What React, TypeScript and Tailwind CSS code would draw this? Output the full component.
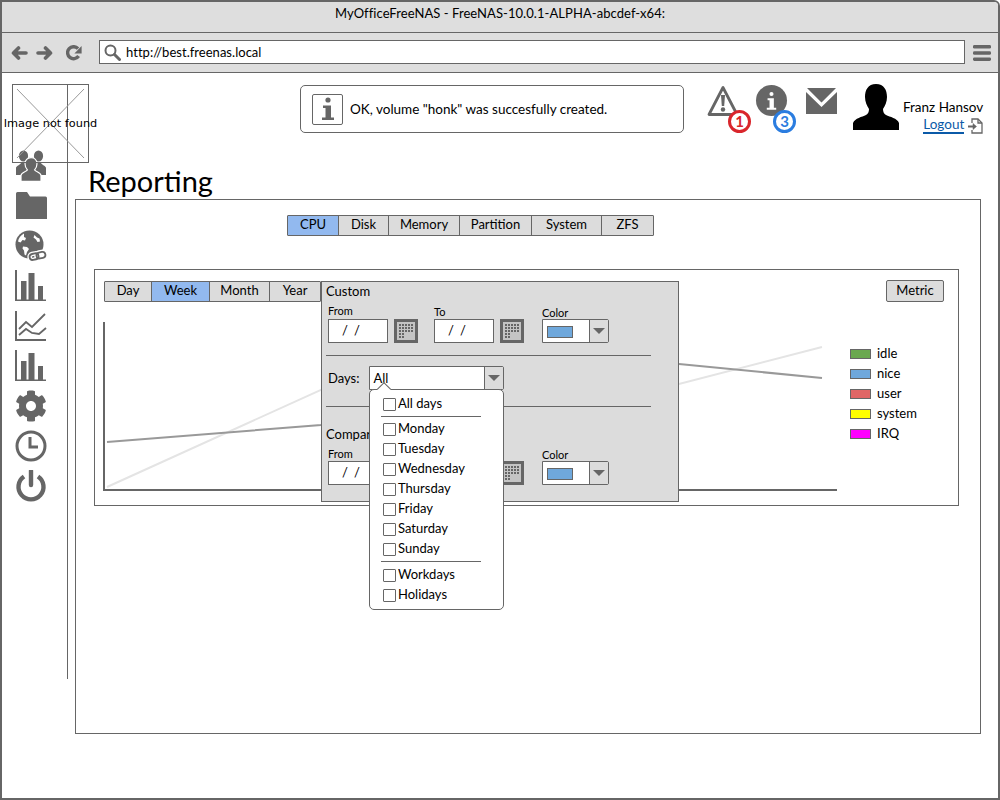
import React from "react";
import { FaCog } from "react-icons/fa";

const G = "#666666";

function ArrowLeft() {
  return (
    <svg width="17" height="14" viewBox="0 0 17 14" fill="none" stroke={G} strokeWidth="3.6" strokeLinecap="round" strokeLinejoin="round">
      <path d="M15 7H3M7.5 2L2.5 7l5 5" />
    </svg>
  );
}
function ArrowRight() {
  return (
    <svg width="17" height="14" viewBox="0 0 17 14" fill="none" stroke={G} strokeWidth="3.6" strokeLinecap="round" strokeLinejoin="round">
      <path d="M2 7h12M9.5 2l5 5-5 5" />
    </svg>
  );
}
function Refresh() {
  return (
    <svg width="16" height="16" viewBox="0 0 16 16" fill="none">
      <path d="M12.6 11A6 6 0 1 1 12 3.6" stroke={G} strokeWidth="3.4" />
      <path d="M15.6 1v7.4H8.4z" fill={G} />
    </svg>
  );
}
function SearchIcon() {
  return (
    <svg width="17" height="17" viewBox="0 0 17 17" fill="none" stroke={G}>
      <circle cx="6.5" cy="6.5" r="5" strokeWidth="2" />
      <path d="M10.5 10.5l5 5" strokeWidth="3" strokeLinecap="round" />
    </svg>
  );
}
function Burger() {
  return (
    <svg width="18" height="16" viewBox="0 0 18 16" fill={G}>
      <rect y="0" width="18" height="3.6" rx="1.4" />
      <rect y="6.2" width="18" height="3.6" rx="1.4" />
      <rect y="12.4" width="18" height="3.6" rx="1.4" />
    </svg>
  );
}
function Users() {
  return (
    <svg width="32" height="32" viewBox="0 0 32 32">
      <g fill={G}>
        <ellipse cx="8.5" cy="6" rx="4.6" ry="5.6" /><ellipse cx="23.5" cy="6" rx="4.6" ry="5.6" />
        <path d="M1 25v-7c0-2 4-3 5-5h5l5 3 5-3h5c1 2 5 3 5 5v7z" />
      </g>
      <g fill={G} stroke="#fff" strokeWidth="1.2">
        <path d="M6 31.4v-6c0-2.5 5-3.5 6.4-5.6-1.6-1.6-2.4-3.6-2.4-6 0-3.6 2.4-6.2 6-6.2s6 2.6 6 6.2c0 2.4-.8 4.4-2.4 6 1.4 2.1 6.4 3.1 6.4 5.6v6z" />
      </g>
    </svg>
  );
}
function Folder() {
  return (
    <svg width="32" height="32" viewBox="0 0 32 32" fill={G}>
      <path d="M1 3.5Q1 2 2.500 2h9.500L15 6.500h15.500Q32 6.500 32 8v21H1z" />
    </svg>
  );
}
function Globe() {
  return (
    <svg width="32" height="32" viewBox="0 0 32 32">
      <circle cx="14.500" cy="14.500" r="14" fill={G} />
      <path d="M9 3.500C6 5 3.500 8 3 11.500l2.500 1 2-2.500 2.500.5 1-2.500-2-1zM8 16.500l4 .5 2 2-2 3-1 3.500-1.500-1-.5-4-1.500-2zM19.500 5l2.500 2.500 2.500 1 .5 3-2.500.5-1.500-2.500-2.500-2z" fill="#fff" />
      <g transform="rotate(-12 22 26)">
        <g fill="none" stroke="#fff" strokeWidth="4.500"><rect x="14.500" y="23" width="9" height="6" rx="3" /><rect x="21.500" y="23" width="9" height="6" rx="3" /></g>
        <g fill="none" stroke={G} strokeWidth="1.800"><rect x="14.500" y="23" width="9" height="6" rx="3" /><rect x="21.500" y="23" width="9" height="6" rx="3" /></g>
      </g>
    </svg>
  );
}
function Bars() {
  return (
    <svg width="32" height="32" viewBox="0 0 32 32" fill={G}>
      <rect x="0" y="0" width="2" height="31" /><rect x="0" y="29.500" width="31" height="1.500" />
      <rect x="6" y="11" width="5.500" height="19" /><rect x="13.500" y="3" width="6" height="27" /><rect x="23" y="16" width="5" height="14" />
    </svg>
  );
}
function Lines() {
  return (
    <svg width="32" height="32" viewBox="0 0 32 32">
      <path d="M1 1v29h30" fill="none" stroke={G} strokeWidth="2" />
      <path d="M4 19l7-7 6 5 13-13M4 25l7-6 6 4 7 1 7-6" fill="none" stroke={G} strokeWidth="1.800" />
    </svg>
  );
}
function Clock() {
  return (
    <svg width="32" height="32" viewBox="0 0 32 32" fill="none" stroke={G}>
      <circle cx="16" cy="16" r="14" strokeWidth="3" />
      <path d="M15 7v10h8" strokeWidth="3" />
    </svg>
  );
}
function Power() {
  return (
    <svg width="32" height="32" viewBox="0 0 32 32" fill="none" stroke={G} strokeWidth="4.400">
      <path d="M9 6.500a12.500 12.500 0 1 0 14 0" />
      <path d="M16 1v14" strokeLinecap="round" />
    </svg>
  );
}
function Person() {
  return (
    <svg width="46" height="46" viewBox="0 0 46 46" fill="#000">
      <path d="M23 0c-8 0-11 6-11 13 0 5 2 9 4 12 0 3-1 5-3 6-4 2-11 3-13 8v7h46v-7c-2-5-9-6-13-8-2-1-3-3-3-6 2-3 4-7 4-12 0-7-3-13-11-13z" />
    </svg>
  );
}
function Envelope() {
  return (
    <svg width="31" height="26" viewBox="0 0 31 26" fill={G}>
      <path d="M1 0h29l-14.500 14.500zM0 4l15.500 15L31 4v22H0z" />
    </svg>
  );
}
function CalendarIcon() {
  return (
    <svg width="24" height="24" viewBox="0 0 24 24" className="shrink-0">
      <rect x="0" y="0" width="24" height="24" fill={G} />
      <rect x="3" y="3" width="18" height="18" fill="#c4c4c4" />
      <g fill={G}>
        {[5, 8, 11, 14, 17].flatMap((y) =>
          [5, 8, 11, 14, 17].map((x) =>
            y >= 14 && x >= 11 ? null : <rect key={`${x}-${y}`} x={x} y={y} width="2" height="2" />
          )
        )}
      </g>
    </svg>
  );
}
function InfoGlyph({ color = G, w = 14, h = 24 }: { color?: string; w?: number; h?: number }) {
  return (
    <svg width={w} height={h} viewBox="0 0 14 24" fill={color}>
      <circle cx="7" cy="3" r="2.600" />
      <path d="M2 8.500h8v12h3V23H1v-2.500h3.500V11H2z" />
    </svg>
  );
}
function Badge({ n, color }: { n: string; color: string }) {
  return (
    <div className="absolute flex h-[23px] w-[23px] items-center justify-center rounded-full border-[3px] bg-white text-[15px] font-bold leading-none" style={{ borderColor: color, color }}>
      {n}
    </div>
  );
}

function Combo({ w, children }: { w: string; children: React.ReactNode }) {
  return (
    <div className={`flex h-[24px] ${w} rounded-r-[2px] border border-[#666] bg-white`}>
      <div className="relative flex-1 overflow-hidden">{children}</div>
      <div className="flex w-[19px] items-center justify-center border-l border-[#666] bg-[#dcdcdc]">
        <div className="h-0 w-0 border-x-[6px] border-t-[6px] border-x-transparent border-t-[#666]" />
      </div>
    </div>
  );
}
function ColorField() {
  return (
    <div className="flex flex-col">
      <div className="h-[13px] text-[11px] leading-[13px]">Color</div>
      <Combo w="w-[67px]">
        <div className="ml-[4px] mt-[6px] h-[12px] w-[26px] border border-[#666] bg-[#6fa8dc]" />
      </Combo>
    </div>
  );
}
function DateField({ label, lead = "leading-[9px]" }: { label: string; lead?: string }) {
  return (
    <div className="flex flex-col">
      <div className={`h-[13px] text-[11px] ${lead}`}>{label}</div>
      <div className="flex items-center gap-[6px]">
        <div className="flex h-[24px] w-[60px] items-center gap-[6px] border border-[#666] bg-white pl-[13px] text-[13px]">
          <span>/</span><span>/</span>
        </div>
        <CalendarIcon />
      </div>
    </div>
  );
}
function Check({ label }: { label: string }) {
  return (
    <div className="flex h-[20px] items-center gap-[2px] pl-[13px] text-[13px]">
      <div className="h-[13px] w-[13px] rounded-[1px] border border-[#666] bg-white" />
      <span className="-mt-[1px]">{label}</span>
    </div>
  );
}
function Tabs({ items, active, widths }: { items: string[]; active: string; widths: string[] }) {
  return (
    <div className="flex h-[21px] rounded-[1px] border border-[#666] bg-[#dcdcdc] text-[13px]">
      {items.map((t, i) => (
        <div
          key={t}
          className={`flex items-center justify-center pb-[2px] ${widths[i]} ${i ? "border-l border-[#666]" : ""} ${t === active ? "bg-[#92b9ef]" : ""}`}
        >
          {t}
        </div>
      ))}
    </div>
  );
}

const legend = [
  ["idle", "bg-[#6aa84f]"],
  ["nice", "bg-[#6fa8dc]"],
  ["user", "bg-[#e06666]"],
  ["system", "bg-[#ffff00]"],
  ["IRQ", "bg-[#ff00ff]"],
];

export default function App() {
  return (
    <div className="relative flex h-[800px] w-[1000px] flex-col overflow-hidden rounded-tr-[6px] border-2 border-[#666] bg-white text-black [font-family:Lato,sans-serif]">
      {/* window title */}
      <div className="flex h-[31px] items-center justify-center border-b border-[#666] bg-[#dedede] pb-[7px] text-[13px] tracking-[0.06px]">
        MyOfficeFreeNAS - FreeNAS-10.0.1-ALPHA-abcdef-x64:
      </div>
      {/* toolbar */}
      <div className="flex h-[40px] items-center border-b border-[#666] bg-[#dedede] pl-[9px]">
        <ArrowLeft />
        <div className="ml-[8px]"><ArrowRight /></div>
        <div className="ml-[13px]"><Refresh /></div>
        <div className="mb-[1px] ml-[17px] flex h-[24px] w-[866px] items-center border border-[#666] bg-white pl-[4px] text-[13px]">
          <SearchIcon />
          <span className="ml-[5px] mt-[2px] tracking-[0.03px]">http://best.freenas.local</span>
        </div>
        <div className="ml-[8px]"><Burger /></div>
      </div>

      {/* body */}
      <div className="flex flex-1">
        <div className="mt-[11px] flex h-[595px] w-[66px] flex-col border-r border-[#666] pl-[13px] pt-[62px]">
          {[<Users />, <Folder />, <Globe />, <Bars />, <Lines />, <Bars />, <FaCog className="h-[32px] w-[32px] text-[#666]" />, <Clock />, <Power />].map((ic, i) => (
            <div key={i} className="flex h-[40px] items-center">{ic}</div>
          ))}
        </div>

        <div className="flex flex-1 flex-col">
          {/* header */}
          <div className="flex h-[91px] items-start pl-[232px] pt-[12px]">
            <div className="flex h-[48px] w-[384px] items-center rounded-[5px] border border-[#666] pl-[11px]">
              <div className="flex h-[31px] w-[31px] items-center justify-center rounded-[2px] border border-[#666]">
                <InfoGlyph />
              </div>
              <span className="ml-[7px] text-[13.5px]">OK, volume "honk" was succesfully created.</span>
            </div>
            <div className="relative ml-[23px] h-[46px] w-[49px]">
              <svg width="32" height="32" viewBox="0 0 32 32" fill="none">
                <path d="M16 2.500L2 29.500h28z" stroke={G} strokeWidth="2.800" strokeLinejoin="round" />
                <path d="M14 10h4l-.8 11h-2.400z" fill={G} />
                <circle cx="16" cy="24.500" r="2.200" fill={G} />
              </svg>
              <div className="absolute left-[21px] top-[25px]"><Badge n="1" color="#d9262c" /></div>
            </div>
            <div className="relative h-[46px] w-[50px]">
              <div className="flex h-[31px] w-[31px] items-center justify-center rounded-full bg-[#666]">
                <InfoGlyph color="#fff" w={11} h={22} />
              </div>
              <div className="absolute left-[17px] top-[25px]"><Badge n="3" color="#2b7de0" /></div>
            </div>
            <div className="mt-[3px]"><Envelope /></div>
            <div className="ml-[16px] -mt-[1px]"><Person /></div>
            <div className="ml-[4px] flex flex-col items-end pt-[12px] text-[13.5px]">
              <span>Franz Hansov</span>
              <div className="flex items-center gap-[3px]">
                <span className="border-b-2 border-[#0b5aa8] leading-[15px] text-[#0b5aa8]">Logout</span>
                <svg width="16" height="16" viewBox="0 0 16 16" fill="none" stroke={G} strokeWidth="1.300">
                  <path d="M5 5V1h6l4 4v10H5v-3" /><path d="M11 1v4h4" />
                  <path d="M1 8.500h7" strokeWidth="2" /><path d="M6 5.500l3.500 3-3.500 3z" fill={G} strokeWidth="0.5" />
                </svg>
              </div>
            </div>
          </div>
          <div className="ml-[20px] h-[35px] text-[29px] leading-[34px]">Reporting</div>

          {/* panel */}
          <div className="ml-[7px] h-[535px] w-[906px] border border-[#666] pt-[15px]">
            <div className="ml-[211px] w-[367px]">
              <Tabs items={["CPU", "Disk", "Memory", "Partition", "System", "ZFS"]} active="CPU" widths={["w-[50px]", "w-[50px]", "w-[71px]", "w-[72px]", "w-[70px]", "w-[52px]"]} />
            </div>
            <div className="relative ml-[18px] mt-[33px] h-[237px] w-[865px] border border-[#666] pl-[9px] pr-[14px] pt-[11px]">
              <div className="flex items-start justify-between">
                <div className="w-[217px]">
                  <Tabs items={["Day", "Week", "Month", "Year"]} active="Week" widths={["w-[46px]", "w-[58px]", "w-[60px]", "w-[51px]"]} />
                </div>
                <div className="-mt-[1px] flex h-[22px] w-[58px] items-center justify-center rounded-[2px] border border-[#666] bg-[#dcdcdc] text-[13px]">Metric</div>
              </div>
              <div className="mt-[18px] flex">
                <svg width="736" height="172" viewBox="102 320 736 172" className="-ml-[2px]" fill="none">
                  <polyline points="107,487 400,354 679,384 822,347" stroke="#e4e4e4" strokeWidth="2" />
                  <polyline points="107,442 321,425 500,350 679,364 822,378" stroke="#999" strokeWidth="2" />
                  <path d="M104 322V490H837" stroke={G} strokeWidth="2" />
                </svg>
                <div className="ml-[12px] flex flex-col pt-[24px]">
                  {legend.map(([l, c]) => (
                    <div key={l} className="flex h-[20px] items-center gap-[6px] text-[13px]">
                      <div className={`h-[10px] w-[21px] border border-[#666] ${c}`} />
                      <span>{l}</span>
                    </div>
                  ))}
                </div>
              </div>

              {/* custom range popover */}
              <div className="absolute left-[226px] top-[11px] h-[221px] w-[358px] border border-[#666] bg-[#dcdcdc] px-[4px] pt-[1px]">
                <div className="h-[17px] text-[13px] leading-[17px]">Custom</div>
                <div className="ml-[2px] mt-[6px] flex">
                  <DateField label="From" />
                  <div className="ml-[16px]"><DateField label="To" lead="leading-[11px]" /></div>
                  <div className="ml-[18px]"><ColorField /></div>
                </div>
                <div className="mt-[12px] w-[325px] border-t border-[#666]" />
                <div className="ml-[2px] mt-[10px] flex items-center gap-[9px] text-[13px]">
                  <span className="mt-[1px]">Days:</span>
                  <Combo w="w-[135px]"><div className="pl-[4px] text-[13px] leading-[22px]">All</div></Combo>
                </div>
                <div className="mt-[16px] w-[325px] border-t border-[#666]" />
                <div className="mt-[19px] h-[17px] text-[13px] leading-[17px]">Compare</div>
                <div className="ml-[2px] mt-[5px] flex">
                  <DateField label="From" lead="leading-[11px]" />
                  <div className="ml-[16px]"><DateField label="To" lead="leading-[11px]" /></div>
                  <div className="ml-[18px]"><ColorField /></div>
                </div>

                {/* days dropdown */}
                <div className="absolute left-[47px] top-[107px] h-[221px] w-[135px] rounded-[5px] border border-[#666] bg-white pt-[4px]">
                  <div className="absolute -top-[6px] left-[9px] h-[10px] w-[10px] rotate-45 border-l border-t border-[#666] bg-white" />
                  <Check label="All days" />
                  <div className="mb-[2px] ml-[11px] mt-[2px] w-[100px] border-t border-[#666]" />
                  {["Monday", "Tuesday", "Wednesday", "Thursday", "Friday", "Saturday", "Sunday"].map((d) => (
                    <Check key={d} label={d} />
                  ))}
                  <div className="mb-[3px] ml-[11px] mt-[2px] w-[100px] border-t border-[#666]" />
                  {["Workdays", "Holidays"].map((d) => <Check key={d} label={d} />)}
                </div>
              </div>
            </div>
          </div>
        </div>
      </div>

      {/* broken image placeholder */}
      <div className="absolute left-[10px] top-[82px] flex h-[79px] w-[77px] items-center justify-center border border-[#666] pt-[2px]">
        <svg className="absolute inset-0" width="75" height="77" viewBox="0 0 75 77">
          <path d="M4 4L71 73M71 4L4 73" stroke="#999" strokeWidth="1" />
        </svg>
        <span className="relative whitespace-nowrap text-[11.3px] [font-family:'DejaVu_Sans',sans-serif]">Image not found</span>
      </div>
    </div>
  );
}
